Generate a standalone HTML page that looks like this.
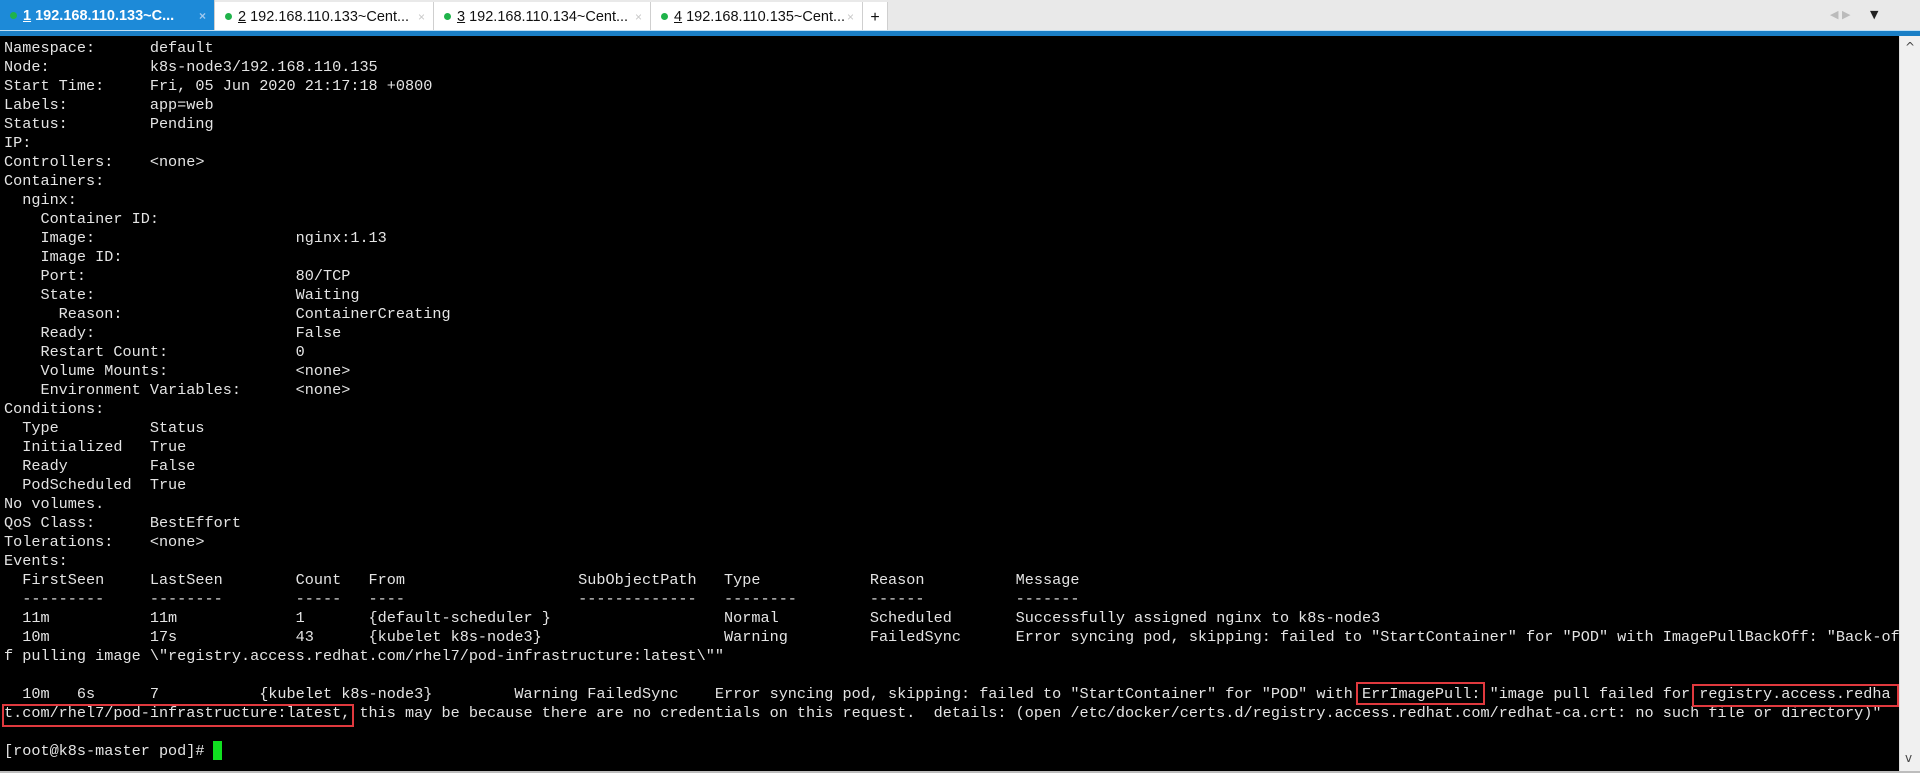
<!DOCTYPE html>
<html><head><meta charset="utf-8"><style>
html,body{margin:0;padding:0;width:1920px;height:773px;overflow:hidden;background:#000;}
#tabs{position:absolute;left:0;top:0;width:1920px;height:33px;background:#e9e9e9;}
.tab{position:absolute;top:2px;height:31px;background:#fff;border-right:1px solid #cfcfcf;font-family:"Liberation Sans",sans-serif;font-size:14.5px;color:#111;line-height:31px;white-space:nowrap;overflow:hidden;}
.tab .dot{display:inline-block;width:7px;height:7px;border-radius:50%;background:#1fb34a;margin:0 6px 1px 10px;vertical-align:middle;}
.tab .x{position:absolute;right:8px;top:0;color:#c8c8c8;font-size:12px;}
.tab.act{background:#1d8ad8;color:#fff;font-weight:bold;top:0;height:33px;line-height:33px;}
.tab.act .x{color:#9fc8ee}
#blue{position:absolute;left:0;top:30px;width:1920px;height:6px;background:#1a7fc6;border-top:1px solid #bfe0f5;}
#term{position:absolute;left:0;top:36px;width:1899px;height:735px;background:#000;}
pre{position:absolute;left:4px;top:2.5px;margin:0;font-family:"Liberation Mono",monospace;font-size:15.2px;line-height:19px;color:#e4e4e4;}
#sb{position:absolute;left:1899px;top:36px;width:21px;height:735px;background:#f0f0f0;border-left:1px solid #ddd;}
#bottom{position:absolute;left:0;top:771px;width:1920px;height:2px;background:#bdbdbd;}
.box{position:absolute;border:2.5px solid #e0393e;box-sizing:border-box;}
#cur{position:absolute;left:213px;top:741px;width:9px;height:19px;background:#10e020;}
</style></head><body>
<div id="tabs">
<div class="tab act" style="left:0;width:214px"><span class="dot"></span><u>1</u> 192.168.110.133~C...<span class="x">×</span></div>
<div class="tab" style="left:215px;width:218px"><span class="dot"></span><u>2</u> 192.168.110.133~Cent...<span class="x">×</span></div>
<div class="tab" style="left:434px;width:216px"><span class="dot"></span><u>3</u> 192.168.110.134~Cent...<span class="x">×</span></div>
<div class="tab" style="left:651px;width:211px"><span class="dot"></span><u>4</u> 192.168.110.135~Cent...<span class="x">×</span></div>
<div class="tab" style="left:863px;width:24px;text-align:center;font-size:16px">+</div>
<div style="position:absolute;left:1870px;top:8px;font-size:11px;color:#222;font-family:'DejaVu Sans',sans-serif">▼</div>
<div style="position:absolute;left:1830px;top:8px;font-size:11px;color:#bbb;font-family:'DejaVu Sans',sans-serif">◀ ▶</div>
</div>
<div id="blue"></div>
<div id="term">
<pre>Namespace:      default
Node:           k8s-node3/192.168.110.135
Start Time:     Fri, 05 Jun 2020 21:17:18 +0800
Labels:         app=web
Status:         Pending
IP:
Controllers:    &lt;none&gt;
Containers:
  nginx:
    Container ID:
    Image:                      nginx:1.13
    Image ID:
    Port:                       80/TCP
    State:                      Waiting
      Reason:                   ContainerCreating
    Ready:                      False
    Restart Count:              0
    Volume Mounts:              &lt;none&gt;
    Environment Variables:      &lt;none&gt;
Conditions:
  Type          Status
  Initialized   True
  Ready         False
  PodScheduled  True
No volumes.
QoS Class:      BestEffort
Tolerations:    &lt;none&gt;
Events:
  FirstSeen     LastSeen        Count   From                   SubObjectPath   Type            Reason          Message
  ---------     --------        -----   ----                   -------------   --------        ------          -------
  11m           11m             1       {default-scheduler }                   Normal          Scheduled       Successfully assigned nginx to k8s-node3
  10m           17s             43      {kubelet k8s-node3}                    Warning         FailedSync      Error syncing pod, skipping: failed to "StartContainer" for "POD" with ImagePullBackOff: "Back-of
f pulling image \"registry.access.redhat.com/rhel7/pod-infrastructure:latest\""

  10m   6s      7           {kubelet k8s-node3}         Warning FailedSync    Error syncing pod, skipping: failed to "StartContainer" for "POD" with ErrImagePull: "image pull failed for registry.access.redha
t.com/rhel7/pod-infrastructure:latest, this may be because there are no credentials on this request.  details: (open /etc/docker/certs.d/registry.access.redhat.com/redhat-ca.crt: no such file or directory)"

[root@k8s-master pod]# </pre>
</div>
<div class="box" style="left:1356px;top:682px;width:129px;height:23px"></div>
<div class="box" style="left:1692px;top:684px;width:207px;height:23px"></div>
<div class="box" style="left:2px;top:704px;width:352px;height:23px"></div>
<div id="cur"></div>
<div id="sb">
<div style="position:absolute;left:5px;top:4px;font-size:12px;color:#444;font-family:'DejaVu Sans',sans-serif">^</div>
<div style="position:absolute;left:5px;top:715px;font-size:12px;color:#444;font-family:'DejaVu Sans',sans-serif">v</div>
</div>
<div id="bottom"></div>
</body></html>
